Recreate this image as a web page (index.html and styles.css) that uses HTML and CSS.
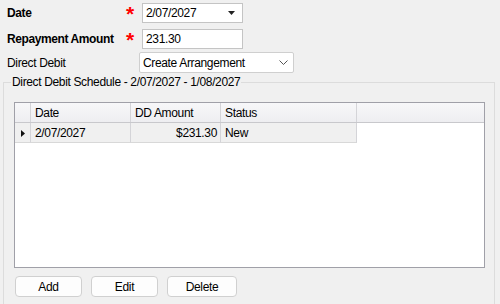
FILE: index.html
```html
<!DOCTYPE html>
<html>
<head>
<meta charset="utf-8">
<link rel="stylesheet" href="styles.css">
</head>
<body>
<div class="form">
  <div class="row r1">
    <span class="lbl bold">Date</span>
    <span class="req">*</span>
    <div class="field">
      <span class="val">2/07/2027</span>
      <svg class="drop" width="7" height="4" viewBox="0 0 7 4"><path d="M0 0H7L3.5 4Z" fill="#222"/></svg>
    </div>
  </div>
  <div class="row r2">
    <span class="lbl bold">Repayment Amount</span>
    <span class="req">*</span>
    <div class="field">
      <span class="val">231.30</span>
    </div>
  </div>
  <div class="row r3">
    <span class="lbl plain">Direct Debit</span>
    <div class="combo">
      <span class="val">Create Arrangement</span>
      <svg class="chev" width="9" height="5" viewBox="0 0 9 5"><path d="M0.5 0.5L4.5 4.5L8.5 0.5" fill="none" stroke="#555" stroke-width="1"/></svg>
    </div>
  </div>
</div>
<fieldset class="group">
  <legend>Direct Debit Schedule - 2/07/2027 - 1/08/2027</legend>
  <div class="grid">
    <div class="head">
      <div class="c rh"></div>
      <div class="c c1">Date</div>
      <div class="c c2">DD Amount</div>
      <div class="c c3">Status</div>
    </div>
    <div class="data">
      <div class="c rh"><svg width="4" height="7" viewBox="0 0 4 7"><path d="M0 0L4 3.5L0 7Z" fill="#111"/></svg></div>
      <div class="c c1">2/07/2027</div>
      <div class="c c2 num">$231.30</div>
      <div class="c c3">New</div>
    </div>
  </div>
  <div class="buttons">
    <button class="btn add">Add</button>
    <button class="btn edit">Edit</button>
    <button class="btn del">Delete</button>
  </div>
</fieldset>
</body>
</html>
```
FILE: styles.css
```css
html, body {
  margin: 0;
  padding: 0;
  background: #f0f0f0;
  overflow: hidden;
}
body {
  width: 500px;
  height: 304px;
  font-family: "Liberation Sans", Arial, sans-serif;
  font-size: 12px;
  letter-spacing: -0.35px;
  color: #000;
}
.form {
  padding-top: 3px;
}
.row {
  display: flex;
  align-items: center;
  height: 20px;
}
.r2 { margin-top: 6px; }
.r3 { margin-top: 3px; height: 21px; }
.lbl {
  padding-left: 7px;
  box-sizing: border-box;
  flex: none;
}
.bold {
  width: 126px;
  font-weight: bold;
  font-size: 12px;
  letter-spacing: -0.4px;
}
.plain {
  width: 139px;
}
.req {
  width: 16px;
  flex: none;
  color: #ff0000;
  font-weight: bold;
  font-size: 21px;
  line-height: 20px;
  align-self: flex-start;
  margin-top: 1px;
  padding-left: 0;
  box-sizing: border-box;
}
.field {
  width: 101px;
  height: 20px;
  flex: none;
  box-sizing: border-box;
  border: 1px solid #c4c4c4;
  background: #fff;
  display: flex;
  align-items: center;
  padding-left: 3px;
}
.drop {
  margin-left: auto;
  margin-right: 7px;
}
.combo {
  width: 155px;
  height: 21px;
  flex: none;
  box-sizing: border-box;
  border: 1px solid #cfcfcf;
  border-radius: 2px;
  background: #fff;
  display: flex;
  align-items: center;
  padding-left: 3px;
}
.chev {
  margin-left: auto;
  margin-right: 5px;
}
.val {
  line-height: 16px;
}
.group {
  margin: 2px 0 0 3px;
  width: 492px;
  height: 260px;
  box-sizing: border-box;
  border: 1px solid #dcdcdc;
  padding: 13px 9px 0 10px;
}
.group legend {
  margin-left: -3px;
  padding: 0 1px;
  line-height: 14px;
}
.grid {
  width: 471px;
  height: 166px;
  box-sizing: border-box;
  border: 1px solid #a0a0a8;
  background: #fff;
}
.head {
  display: flex;
  height: 19px;
  border-bottom: 1px solid #c8c8cc;
  background: linear-gradient(#f7f7f9, #eeeef1);
}
.data {
  display: flex;
  height: 20px;
}
.c {
  box-sizing: border-box;
  border-right: 1px solid #d4d4d8;
  display: flex;
  align-items: center;
  padding-left: 4px;
  white-space: nowrap;
}
.data .c {
  background: #f0f0f0;
  border-bottom: 1px solid #d8d8d8;
  padding-top: 1px;
}
.rh { width: 16px; padding-left: 0; justify-content: center; }
.c1 { width: 100px; }
.c2 { width: 90px; }
.c3 { width: 136px; }
.num { justify-content: flex-end; padding-right: 3px; padding-left: 0; }
.buttons {
  display: flex;
  gap: 9px;
  margin-top: 8px;
  padding-left: 1px;
}
.btn {
  height: 21px;
  box-sizing: border-box;
  border: 1px solid #d0d0d0;
  border-radius: 4px;
  background: #fdfdfd;
  font-family: "Liberation Sans", Arial, sans-serif;
  font-size: 12px;
  color: #000;
  padding: 0;
  letter-spacing: -0.35px;
}
.add { width: 67px; }
.edit { width: 67px; }
.del { width: 70px; }
```
